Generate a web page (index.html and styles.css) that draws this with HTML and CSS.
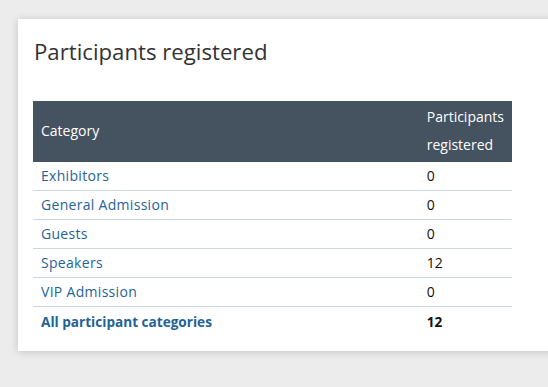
FILE: index.html
```html
<!DOCTYPE html>
<html>
<head>
<meta charset="utf-8">
<link rel="stylesheet" href="styles.css">
</head>
<body>
<div class="card">
  <h1 class="title">Participants registered</h1>
  <table class="stats">
    <thead>
      <tr><th class="cat">Category</th><th class="num">Participants<br>registered</th></tr>
    </thead>
    <tbody>
      <tr><td><a href="#">Exhibitors</a></td><td>0</td></tr>
      <tr><td><a href="#">General Admission</a></td><td>0</td></tr>
      <tr><td><a href="#">Guests</a></td><td>0</td></tr>
      <tr><td><a href="#">Speakers</a></td><td>12</td></tr>
      <tr><td><a href="#">VIP Admission</a></td><td>0</td></tr>
      <tr class="total"><td><a href="#">All participant categories</a></td><td>12</td></tr>
    </tbody>
  </table>
</div>
</body>
</html>
```
FILE: styles.css
```css
html, body {
  margin: 0;
  padding: 0;
  background: #ececec;
  overflow: hidden;
  font-family: "Open Sans", "Liberation Sans", sans-serif;
}
body {
  padding: 19px 0 0 18px;
  height: 387px;
  box-sizing: border-box;
}
.card {
  background: #fff;
  width: 560px;
  box-sizing: border-box;
  padding: 16px 15px 15px 15px;
  box-shadow: 0 1px 8px rgba(0,0,0,0.18);
}
.title {
  margin: 0 0 34px 1px;
  font-size: 22.2px;
  font-weight: 400;
  color: #333;
  line-height: 30px;
  padding-top: 2px;
}
.stats {
  border-collapse: collapse;
  width: 479px;
  font-size: 14px;
}
.stats th {
  background: #45525f;
  color: #fff;
  font-weight: 400;
  text-align: left;
  padding: 2px 8px 3px 8px;
  line-height: 28px;
}
.stats th.num {
  width: 77px;
}
.stats td {
  padding: 0 8px;
  line-height: 28px;
  border-bottom: 1px solid #ccd6df;
  color: #111;
}
.stats a {
  color: #1f6397;
  text-decoration: none;
  letter-spacing: 0.3px;
}
.stats tr.total td {
  border-bottom: none;
  font-weight: 700;
  font-size: 13.6px;
  padding-top: 1px;
}
.stats tr.total a {
  letter-spacing: 0;
}
```
